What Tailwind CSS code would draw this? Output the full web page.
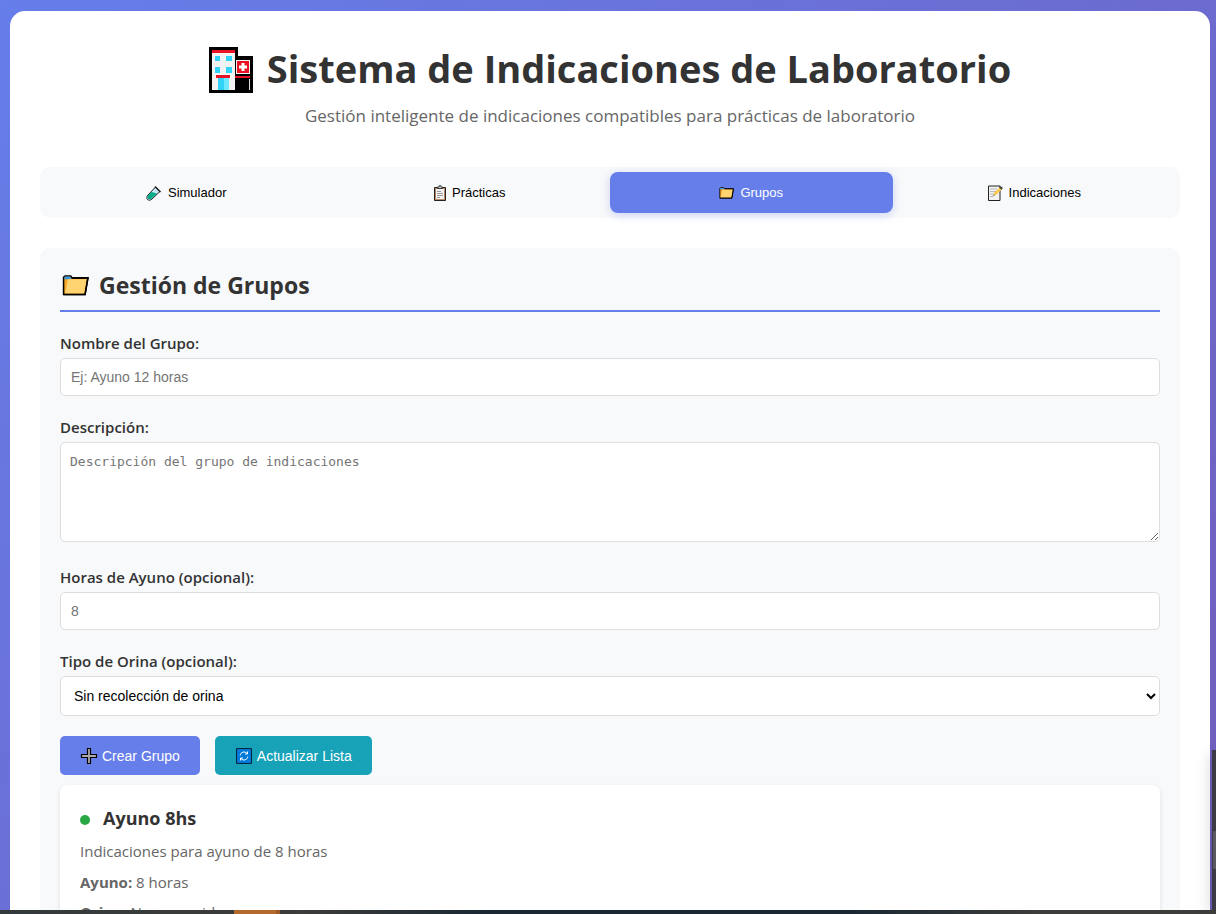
<!DOCTYPE html>
<html lang="es">
<head>
<meta charset="utf-8">
<meta name="viewport" content="width=device-width, initial-scale=1">
<title>Sistema de Indicaciones de Laboratorio</title>
<script src="https://cdn.jsdelivr.net/npm/@tailwindcss/browser@4"></script>
</head>
<body class="relative flex h-screen flex-col overflow-hidden bg-[linear-gradient(135deg,#667eea_0%,#764ba2_150%)] font-['Open_Sans','Noto_Sans',sans-serif] text-[#333]">
<svg class="hidden" aria-hidden="true">
  <symbol id="folder" viewBox="0 0 28 22">
    <path d="M1.5 2.5 3 1h6l1.5 2H27l-3 17.5H1.5z" fill="#f5a623" stroke="#000" stroke-width="1.6"/>
    <path d="M2.5 1.500h6l1.500 3H2.500z" fill="#3a96dd"/>
    <path d="M6 4.500h19.500L23 19.500H3z" fill="#ffd36f"/>
    <path d="M10 3.200h17L24 20.500H1.500" fill="none" stroke="#000" stroke-width="1.600"/>
  </symbol>
</svg>
<main class="min-h-0 flex-1 overflow-hidden pt-[11px] pr-1.5 pl-2.5">
  <div class="h-full rounded-t-[15px] bg-white px-[30px] pt-[30px]">
    <header class="mb-[34px] text-center">
      <h1 class="flex h-[58px] items-center justify-center gap-3.5 text-[38px] font-bold">
        <svg class="h-[46px] w-11 shrink-0" viewBox="0 0 44 46" aria-hidden="true">
          <path d="M0 0h29v9h15v37H0z" fill="#000"/>
          <path d="M3 3h23v40H3z" fill="#f2f2f2"/>
          <path d="M3 3h23v3H3z" fill="#e81224"/>
          <path d="M6 9h5v5H6zM17 9h6v5h-6zM6 20h5v6H6zM17 20h6v6h-6z" fill="#31d2f7"/>
          <path d="M9 31h11v12H9z" fill="#31d2f7"/><path d="M15 31h5v12h-5z" fill="#6ee9ff"/>
          <path d="M7 28h14v3H7zM26 29h15v2H26z" fill="#e81224"/>
          <path d="M27 13h14v14H27z" fill="#f2f2f2"/><path d="M28 14h12v12H28z" fill="#e81224"/>
          <path d="M32.500 16h3v2.500H38v3h-2.500V24h-3v-2.500H30v-3h2.500z" fill="#fff"/>
          <path d="M40.500 32v11" stroke="#ddd"/>
        </svg>
        <span class="pb-1">Sistema de Indicaciones de Laboratorio</span>
      </h1>
      <p class="flex h-[34px] items-center justify-center text-[17px] text-[#666]">Gestión inteligente de indicaciones compatibles para prácticas de laboratorio</p>
    </header>

    <nav class="mb-[30px] flex rounded-[10px] bg-[#f8f9fa] p-[5px] font-['Liberation_Sans',Arial,sans-serif] text-[13px] text-black">
      <button class="flex h-[41px] flex-1 items-center justify-center gap-1.5 rounded-lg">
        <svg class="size-4" viewBox="0 0 16 16" aria-hidden="true"><path d="m9.500 2 4.500 4.500L6 14c-1.500 1.500-3.500 1.500-4.500.500S.500 11.500 2 10z" fill="#c7e6f5" stroke="#222"/><path d="M5.500 7 11 8.500 5.600 13.500c-1.200 1-2.700 1-3.500.300s-.800-2.300.300-3.500z" fill="#00ae88"/><path d="m9 1.500 5.500 5.500" stroke="#222" stroke-width="1.500"/></svg>
        <span>Simulador</span>
      </button>
      <button class="flex h-[41px] flex-1 items-center justify-center gap-1 rounded-lg">
        <svg class="size-4" viewBox="0 0 16 16" aria-hidden="true"><path d="M2.500 2.500h11v13h-11z" fill="#b98a68" stroke="#222"/><path d="M4 4h8v10H4z" fill="#f2f2f2"/><path d="M5.500 3.500V2H7V.800h2V2h1.500v1.500z" fill="#ccc" stroke="#222" stroke-width=".8"/><path d="M5 6.500h4M5 8.500h6M5 10.500h6M5 12.500h3" stroke="#999"/></svg>
        <span>Prácticas</span>
      </button>
      <button class="flex h-[41px] flex-1 items-center justify-center gap-1.5 rounded-lg bg-[#667eea] text-white shadow-[0_2px_10px_rgba(102,126,234,0.3)]">
        <svg class="h-3 w-[15px]" aria-hidden="true"><use href="#folder"/></svg>
        <span>Grupos</span>
      </button>
      <button class="flex h-[41px] flex-1 items-center justify-center gap-1.5 rounded-lg">
        <svg class="size-4" viewBox="0 0 16 16" aria-hidden="true"><path d="M1.500 1H13v14.500H1.500z" fill="#f2f2f2" stroke="#222"/><path d="M3 4h7M3 6.500h7M3 9h4M3 11.500h3" stroke="#bbb"/><path d="m6 11 1-3 6-6 2 2-6 6z" fill="#fcc84a"/><path d="m12.500 2.500 1.500-1L15.500 3l-1 1.500z" fill="#555" stroke="#222" stroke-width=".6"/><path d="m5.500 11.500 1-2.500 1.500 1.500z" fill="#999"/></svg>
        <span>Indicaciones</span>
      </button>
    </nav>

    <section class="rounded-t-[10px] bg-[#f8f9fa] px-5 pt-5">
      <h2 class="mb-5 flex h-11 items-center gap-2.5 border-b-2 border-[#667eea] pl-0.5 pb-2 text-[23px] font-bold">
        <svg class="h-[21px] w-[27px]" aria-hidden="true"><use href="#folder"/></svg>
        <span>Gestión de Grupos</span>
      </h2>
      <form>
        <div class="mb-5">
          <label for="nombre" class="mb-1 block text-[15px] leading-[22px] font-semibold">Nombre del Grupo:</label>
          <input id="nombre" type="text" placeholder="Ej: Ayuno 12 horas" class="block h-[38px] w-full rounded-[5px] border border-[#ddd] bg-white px-2.5 font-['Liberation_Sans',Arial,sans-serif] text-sm placeholder:text-[#757575]">
        </div>
        <div class="mb-6">
          <label for="descripcion" class="mb-1 block text-[15px] leading-[22px] font-semibold">Descripción:</label>
          <textarea id="descripcion" placeholder="Descripción del grupo de indicaciones" class="block h-[100px] w-full resize-y rounded-[5px] border border-[#ddd] bg-white px-[9px] py-[9px] font-['DejaVu_Sans_Mono',monospace] text-[13px] leading-5 placeholder:text-[#757575]"></textarea>
        </div>
        <div class="mb-5">
          <label for="ayuno" class="mb-1 block text-[15px] leading-[22px] font-semibold">Horas de Ayuno (opcional):</label>
          <input id="ayuno" type="number" placeholder="8" class="block h-[38px] w-full rounded-[5px] border border-[#ddd] bg-white px-2.5 font-['Liberation_Sans',Arial,sans-serif] text-sm placeholder:text-[#757575]">
        </div>
        <div class="mb-5">
          <label for="orina" class="mb-1 block text-[15px] leading-[22px] font-semibold">Tipo de Orina (opcional):</label>
          <select id="orina" class="block h-10 w-full rounded-[5px] border border-[#ddd] bg-white pl-[9px] font-['Liberation_Sans',Arial,sans-serif] text-sm text-black">
            <option>Sin recolección de orina</option>
          </select>
        </div>
        <div class="mb-2.5 flex gap-[15px] font-['Liberation_Sans',Arial,sans-serif] text-sm text-white">
          <button type="button" class="flex h-[39px] items-center gap-1 rounded-[5px] bg-[#667eea] px-5">
            <svg class="size-[18px]" viewBox="0 0 18 18" aria-hidden="true"><path d="M7.500 1.500h3v6h6v3h-6v6h-3v-6h-6v-3h6z" fill="#aaa" stroke="#000" stroke-width="1.200"/></svg>
            <span>Crear Grupo</span>
          </button>
          <button type="button" class="flex h-[39px] items-center gap-1 rounded-[5px] bg-[#17a2b8] px-5">
            <svg class="size-[18px]" viewBox="0 0 18 18" aria-hidden="true"><path d="M1.500 1.500h15v15h-15z" fill="#0078d7" stroke="#06263f"/><path d="M5.200 8.500c.3-3.600 4.800-4.700 6.800-2M12.800 9.500c-.3 3.600-4.800 4.700-6.800 2M12.500 4.500v2.500H10M5.500 13.500V11H8" fill="none" stroke="#fff"/></svg>
            <span>Actualizar Lista</span>
          </button>
        </div>
      </form>
      <article class="rounded-lg bg-white px-5 pt-5 pb-5 text-[15px] text-[#666] shadow-[0_2px_5px_rgba(0,0,0,0.1)]">
        <h3 class="mb-[9px] flex h-[27px] items-center gap-[13px] text-[18px] font-bold text-[#333]">
          <span class="mt-0.5 size-2.5 rounded-full bg-[#28a745]"></span>
          <span>Ayuno 8hs</span>
        </h3>
        <p class="mb-2.5 leading-[21px]">Indicaciones para ayuno de 8 horas</p>
        <p class="mb-[9px] leading-[21px]"><strong>Ayuno:</strong> 8 horas</p>
        <p class="leading-[21px]"><strong>Orina:</strong> No requerida</p>
      </article>
    </section>
  </div>
</main>
<div class="absolute top-[750px] right-0 bottom-1 w-1 bg-[#3b3a45] shadow-[0_4px_14px_rgba(0,0,0,0.35)]">
  <div class="mt-[81px] ml-px h-[38px] bg-[#5a5962]"></div>
</div>
<footer class="relative h-1 bg-[linear-gradient(90deg,#333a3b_0%,#3c3c3a_25%,#192833_40%,#192833_70%,#3c3c3a_85%)]">
  <div class="ml-[234px] h-full w-[46px] border-r-4 border-[#9c5a26] bg-[#b4692d]"></div>
</footer>
</body>
</html>
